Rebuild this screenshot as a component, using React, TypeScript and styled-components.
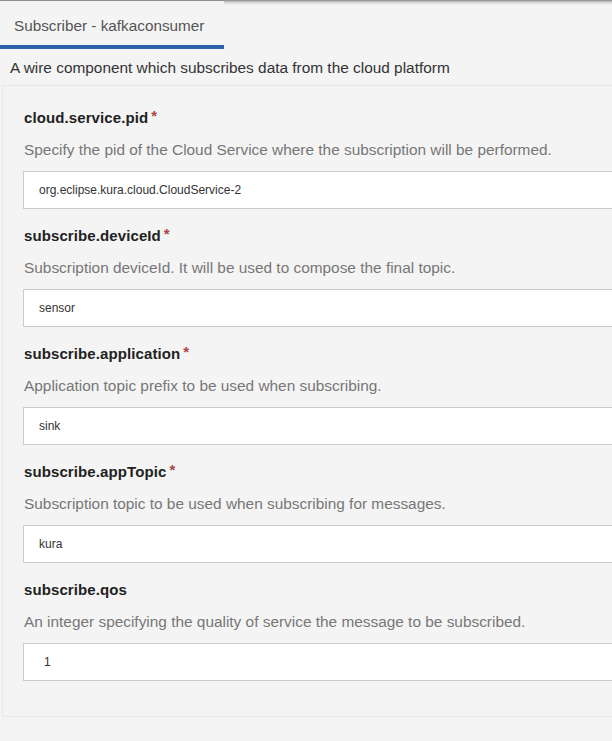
import React from "react";
import styled, { createGlobalStyle } from "styled-components";

const Global = createGlobalStyle`
  html, body { margin: 0; padding: 0; }
  body {
    background: #f4f4f4;
    font-family: "Liberation Sans", Arial, sans-serif;
    overflow: hidden;
    width: 612px;
    height: 741px;
  }
`;

const Page = styled.div`
  width: 612px;
  height: 741px;
  overflow: hidden;
  background: #f4f4f4;
`;

const TabBar = styled.div`
  display: flex;
  height: 49px;
`;

const Tab = styled.div`
  width: 224px;
  box-sizing: border-box;
  border-top: 1px solid #8c8c8c;
  border-bottom: 4px solid #2b62ab;
  padding: 16px 0 0 14px;
  font-size: 15.3px;
  color: #555;
`;

const TabFill = styled.div`
  flex: 1;
  background: linear-gradient(
    to bottom,
    rgba(0, 0, 0, 0.45) 0,
    rgba(0, 0, 0, 0.15) 2px,
    rgba(0, 0, 0, 0.04) 4px,
    rgba(0, 0, 0, 0) 6px
  );
`;

const Intro = styled.div`
  padding: 10px 0 0 10px;
  height: 26px;
  font-size: 15.4px;
  color: #333;
`;

const Panel = styled.div`
  margin-left: 2px;
  width: 700px;
  height: 632px;
  box-sizing: border-box;
  border: 1px solid #e8e8e8;
  border-right: none;
  background: #f4f4f4;
  padding: 23px 0 0 20px;
  display: flex;
  flex-direction: column;
`;

const Field = styled.div`
  display: flex;
  flex-direction: column;
  height: 118px;
`;

const Label = styled.div`
  font-size: 15px;
  font-weight: bold;
  color: #222;
  letter-spacing: 0.1px;
  height: 32px;
  padding-left: 1px;
`;

const Star = styled.span`
  color: #a94442;
  font-size: 15px;
  margin-left: 3px;
  position: relative;
  top: -2px;
`;

const Help = styled.div`
  font-size: 15.4px;
  color: #777;
  height: 30px;
  padding-left: 1px;
`;

const Input = styled.div<{ $pad?: number }>`
  box-sizing: border-box;
  height: 38px;
  width: 640px;
  background: #fff;
  border: 1px solid #ccc;
  display: flex;
  align-items: center;
  padding-left: ${(p) => p.$pad ?? 15}px;
  font-size: 12px;
  color: #333;
`;

const fields = [
  {
    name: "cloud.service.pid",
    req: true,
    help: "Specify the pid of the Cloud Service where the subscription will be performed.",
    value: "org.eclipse.kura.cloud.CloudService-2",
  },
  {
    name: "subscribe.deviceId",
    req: true,
    help: "Subscription deviceId. It will be used to compose the final topic.",
    value: "sensor",
  },
  {
    name: "subscribe.application",
    req: true,
    help: "Application topic prefix to be used when subscribing.",
    value: "sink",
  },
  {
    name: "subscribe.appTopic",
    req: true,
    help: "Subscription topic to be used when subscribing for messages.",
    value: "kura",
  },
  {
    name: "subscribe.qos",
    req: false,
    help: "An integer specifying the quality of service the message to be subscribed.",
    value: "1",
    pad: 20,
  },
];

export default function App() {
  return (
    <Page>
      <Global />
      <TabBar>
        <Tab>Subscriber - kafkaconsumer</Tab>
        <TabFill />
      </TabBar>
      <Intro>A wire component which subscribes data from the cloud platform</Intro>
      <Panel>
        {fields.map((f) => (
          <Field key={f.name}>
            <Label>
              {f.name}
              {f.req && <Star>*</Star>}
            </Label>
            <Help>{f.help}</Help>
            <Input $pad={f.pad}>{f.value}</Input>
          </Field>
        ))}
      </Panel>
    </Page>
  );
}
